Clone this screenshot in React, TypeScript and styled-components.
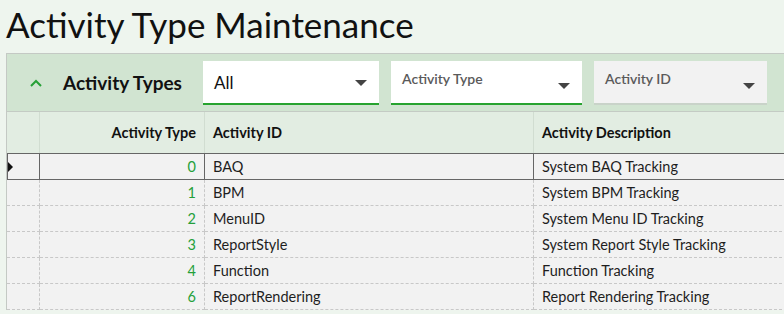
import React from 'react';
import styled, { createGlobalStyle } from 'styled-components';

const GlobalStyle = createGlobalStyle`
  html, body {
    margin: 0;
    padding: 0;
    background: #eef5ee;
    overflow: hidden;
  }
  body {
    font-family: Lato, 'Noto Sans', sans-serif;
    color: #1e1e1e;
  }
`;

const Page = styled.div`
  width: 784px;
  height: 314px;
  overflow: hidden;
`;

const Title = styled.h1`
  margin: 0;
  height: 53px;
  box-sizing: border-box;
  padding: 4px 0 0 6px;
  font-size: 35px;
  font-weight: 400;
  line-height: 40px;
  color: #111;
`;

const Panel = styled.section`
  margin-left: 6px;
  width: 800px;
  border-top: 1px solid #c4c9c4;
  border-left: 1px solid #c4c9c4;
`;

const PanelHeader = styled.div`
  height: 57px;
  background: #d1e4d1;
  border-bottom: 1px solid #c4cbc4;
  display: flex;
  align-items: center;
  padding-left: 22px;
`;

const Chevron = styled.svg`
  width: 14px;
  height: 14px;
  margin-right: 20px;
`;

const PanelTitle = styled.span`
  font-size: 19px;
  font-weight: 700;
  color: #111;
  width: 140px;
`;

const Fields = styled.div`
  display: flex;
  gap: 12px;
`;

const Field = styled.div<{ $w: number; $disabled?: boolean }>`
  position: relative;
  width: ${p => p.$w}px;
  height: 44px;
  box-sizing: border-box;
  background: ${p => (p.$disabled ? '#f2f2f2' : '#fff')};
  border-bottom: 2px solid ${p => (p.$disabled ? '#c9d3c9' : '#27a32f')};
  display: flex;
  padding: 0 11px;
`;

const FieldValue = styled.span`
  font-size: 17px;
  line-height: 44px;
  color: #111;
`;

const FieldLabel = styled.span`
  font-size: 14px;
  font-weight: 600;
  color: #5a5a5a;
  line-height: 36px;
`;

const Caret = styled.span<{ $low?: boolean }>`
  position: absolute;
  right: 12px;
  top: ${p => (p.$low ? 22 : 19)}px;
  width: 0;
  height: 0;
  border-left: 6px solid transparent;
  border-right: 6px solid transparent;
  border-top: 6px solid #444;
`;

const Grid = styled.div`
  display: grid;
  grid-template-columns: 33px 165px 329px 1fr;
`;

const HeadCell = styled.div<{ $right?: boolean }>`
  height: 41px;
  background: #e2ede2;
  border-right: 1px solid #d1ddd1;
  box-sizing: border-box;
  display: flex;
  align-items: center;
  justify-content: ${p => (p.$right ? 'flex-end' : 'flex-start')};
  padding: 0 8px;
  font-size: 14.5px;
  font-weight: 700;
  color: #111;
`;

const Cell = styled.div<{ $right?: boolean; $selected?: boolean; $num?: boolean }>`
  box-sizing: border-box;
  background: #f2f2f2;
  display: flex;
  align-items: center;
  justify-content: ${p => (p.$right ? 'flex-end' : 'flex-start')};
  padding: 0 8px;
  font-size: 14.5px;
  color: ${p => (p.$num ? '#24a03a' : '#1e1e1e')};
  border-right: 1px ${p => (p.$selected ? 'solid #666' : 'dashed #c8c8c8')};
  border-bottom: 1px ${p => (p.$selected ? 'solid #666' : 'dashed #c8c8c8')};
  border-top: ${p => (p.$selected ? '1px solid #666' : 'none')};
  height: ${p => (p.$selected ? 27 : 26)}px;
  white-space: nowrap;
`;

const SelectorCell = styled(Cell)<{ $selected?: boolean }>`
  padding: 0;
  border-left: ${p => (p.$selected ? '1px solid #666' : 'none')};
`;

const RowMark = styled.span`
  width: 0;
  height: 0;
  border-top: 5px solid transparent;
  border-bottom: 5px solid transparent;
  border-left: 5px solid #111;
`;

const rows = [
  { type: 0, id: 'BAQ', desc: 'System BAQ Tracking' },
  { type: 1, id: 'BPM', desc: 'System BPM Tracking' },
  { type: 2, id: 'MenuID', desc: 'System Menu ID Tracking' },
  { type: 3, id: 'ReportStyle', desc: 'System Report Style Tracking' },
  { type: 4, id: 'Function', desc: 'Function Tracking' },
  { type: 6, id: 'ReportRendering', desc: 'Report Rendering Tracking' },
];

export default function App() {
  return (
    <Page>
      <GlobalStyle />
      <Title>Activity Type Maintenance</Title>
      <Panel>
        <PanelHeader>
          <Chevron viewBox="0 0 14 14">
            <path d="M2 10 L7 5 L12 10" fill="none" stroke="#26a036" strokeWidth="2" />
          </Chevron>
          <PanelTitle>Activity Types</PanelTitle>
          <Fields>
            <Field $w={176}>
              <FieldValue>All</FieldValue>
              <Caret />
            </Field>
            <Field $w={191}>
              <FieldLabel>Activity Type</FieldLabel>
              <Caret $low />
            </Field>
            <Field $w={173} $disabled>
              <FieldLabel>Activity ID</FieldLabel>
              <Caret $low />
            </Field>
          </Fields>
        </PanelHeader>
        <Grid>
          <HeadCell />
          <HeadCell $right>Activity Type</HeadCell>
          <HeadCell>Activity ID</HeadCell>
          <HeadCell>Activity Description</HeadCell>
          {rows.map((r, i) => {
            const sel = i === 0;
            return (
              <React.Fragment key={r.id}>
                <SelectorCell $selected={sel}>{sel && <RowMark />}</SelectorCell>
                <Cell $selected={sel} $right $num>
                  {r.type}
                </Cell>
                <Cell $selected={sel}>{r.id}</Cell>
                <Cell $selected={sel}>{r.desc}</Cell>
              </React.Fragment>
            );
          })}
        </Grid>
      </Panel>
    </Page>
  );
}
